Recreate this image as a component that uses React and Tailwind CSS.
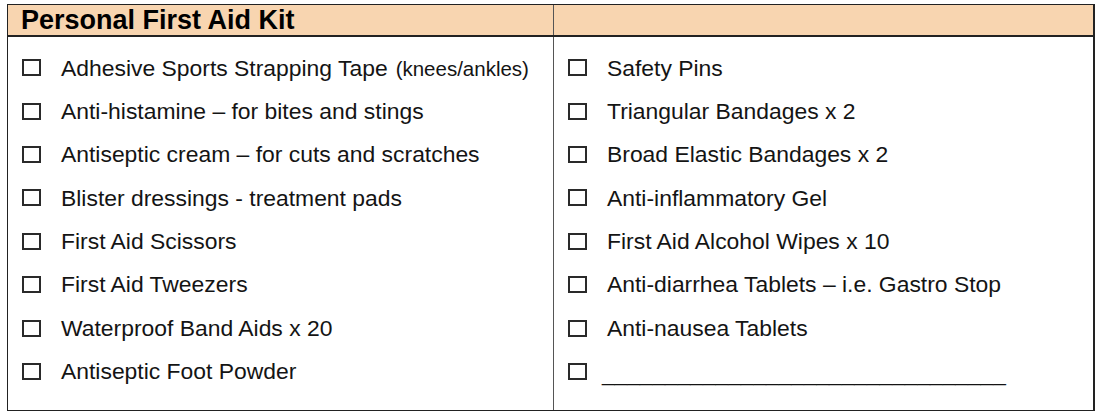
const leftItems = [
  { label: 'Adhesive Sports Strapping Tape', note: '(knees/ankles)' },
  { label: 'Anti-histamine – for bites and stings' },
  { label: 'Antiseptic cream – for cuts and scratches' },
  { label: 'Blister dressings - treatment pads' },
  { label: 'First Aid Scissors' },
  { label: 'First Aid Tweezers' },
  { label: 'Waterproof Band Aids x 20' },
  { label: 'Antiseptic Foot Powder' },
];

const rightItems = [
  { label: 'Safety Pins' },
  { label: 'Triangular Bandages x 2' },
  { label: 'Broad Elastic Bandages x 2' },
  { label: 'Anti-inflammatory Gel' },
  { label: 'First Aid Alcohol Wipes x 10' },
  { label: 'Anti-diarrhea Tablets – i.e. Gastro Stop' },
  { label: 'Anti-nausea Tablets' },
  { blank: true },
];

function Box() {
  return <span className="block h-[17px] w-[19px] shrink-0 border-2 border-[#2a2a2a] bg-white" />;
}

function Row({ item }) {
  return (
    <div className="flex h-[43.4px] items-center">
      <Box />
      {item.blank ? (
        <span className="ml-[15px] translate-y-[2px] whitespace-pre text-[22.7px]">{'_'.repeat(32)}</span>
      ) : (
        <span className="ml-[20px] whitespace-nowrap">
          {item.label}
          {item.note && <span className="ml-[8px] text-[20.5px]">{item.note}</span>}
        </span>
      )}
    </div>
  );
}

export default function App() {
  return (
    <div
      className="h-[417px] w-[1100px] bg-white pl-[7px] pt-[4px] text-[22.9px] text-[#141414]"
      style={{ fontFamily: '"Liberation Sans", Arial, sans-serif' }}
    >
      <div className="w-[1088px] border border-r-2 border-[#222]">
        <div className="flex h-[32px] border-b-2 border-[#222] bg-[#f8d5b0]">
          <div className="flex w-[546px] items-center border-r border-[#555] pl-[13px] text-[27px] font-bold leading-none text-black">
            Personal First Aid Kit
          </div>
          <div className="flex-1" />
        </div>
        <div className="flex">
          <div className="w-[546px] border-r border-[#555] pb-[17px] pl-[14px] pt-[9px]">
            {leftItems.map((item, i) => (
              <Row key={i} item={item} />
            ))}
          </div>
          <div className="flex-1 pb-[17px] pl-[14px] pt-[9px]">
            {rightItems.map((item, i) => (
              <Row key={i} item={item} />
            ))}
          </div>
        </div>
      </div>
    </div>
  );
}
